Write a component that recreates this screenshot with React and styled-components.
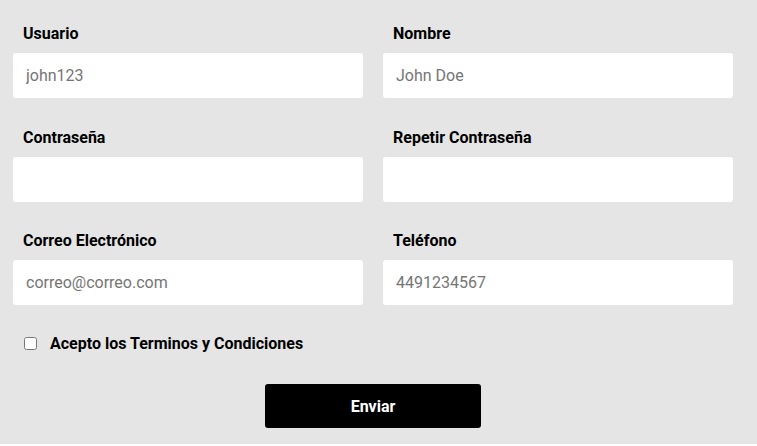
import React from 'react';
import styled, { createGlobalStyle } from 'styled-components';

const GlobalStyle = createGlobalStyle`
  body {
    margin: 0;
    background: #ffffff;
    font-family: Roboto, 'Liberation Sans', sans-serif;
  }
`;

const fields = [
  { label: 'Usuario', placeholder: 'john123', type: 'text' },
  { label: 'Nombre', placeholder: 'John Doe', type: 'text' },
  { label: 'Contraseña', placeholder: '', type: 'password' },
  { label: 'Repetir Contraseña', placeholder: '', type: 'password' },
  { label: 'Correo Electrónico', placeholder: 'correo@correo.com', type: 'email' },
  { label: 'Teléfono', placeholder: '4491234567', type: 'tel' },
];

class App extends React.Component {
  render() {
    return (
      <div>
        <GlobalStyle />
        <Form onSubmit={(e) => e.preventDefault()}>
          <Grid>
            {fields.map((f) => (
              <Field key={f.label}>
                <Label>{f.label}</Label>
                <Input type={f.type} placeholder={f.placeholder} />
              </Field>
            ))}
          </Grid>
          <Terms>
            <Checkbox type="checkbox" />
            <TermsText>Acepto los Terminos y Condiciones</TermsText>
          </Terms>
          <Actions>
            <SubmitButton type="submit">Enviar</SubmitButton>
          </Actions>
        </Form>
      </div>
    );
  }
}

export default App;

const Form = styled.form`
  background: #e5e5e5;
  padding: 24px 24px 16px 13px;
  box-sizing: border-box;
  width: 757px;
`;

const Grid = styled.div`
  display: grid;
  grid-template-columns: 350px 350px;
  column-gap: 20px;
  row-gap: 29.5px;
`;

const Field = styled.div`
  display: flex;
  flex-direction: column;
`;

const Label = styled.label`
  font-family: Roboto, 'Liberation Sans', sans-serif;
  font-size: 16px;
  font-weight: 700;
  line-height: 20px;
  color: #000;
  padding-left: 10px;
  margin-bottom: 9px;
`;

const Input = styled.input`
  height: 45px;
  box-sizing: border-box;
  border: none;
  border-radius: 3px;
  background: #fff;
  padding: 0 13px;
  font-family: Roboto, 'Liberation Sans', sans-serif;
  font-size: 16px;
  color: #333;
  outline: none;

  &::placeholder {
    color: #757575;
  }
`;

const Terms = styled.label`
  display: flex;
  align-items: center;
  height: 20px;
  margin-top: 28px;
  padding-left: 11px;
`;

const Checkbox = styled.input`
  width: 13px;
  height: 13px;
  margin: 0 13px 0 0;
`;

const TermsText = styled.span`
  font-family: Roboto, 'Liberation Sans', sans-serif;
  font-size: 16px;
  font-weight: 700;
  color: #000;
`;

const Actions = styled.div`
  display: flex;
  justify-content: center;
  margin-top: 31px;
`;

const SubmitButton = styled.button`
  width: 216px;
  height: 44px;
  border: none;
  border-radius: 3px;
  background: #000;
  color: #fff;
  font-family: Roboto, 'Liberation Sans', sans-serif;
  font-size: 16px;
  font-weight: 700;
  cursor: pointer;
`;
